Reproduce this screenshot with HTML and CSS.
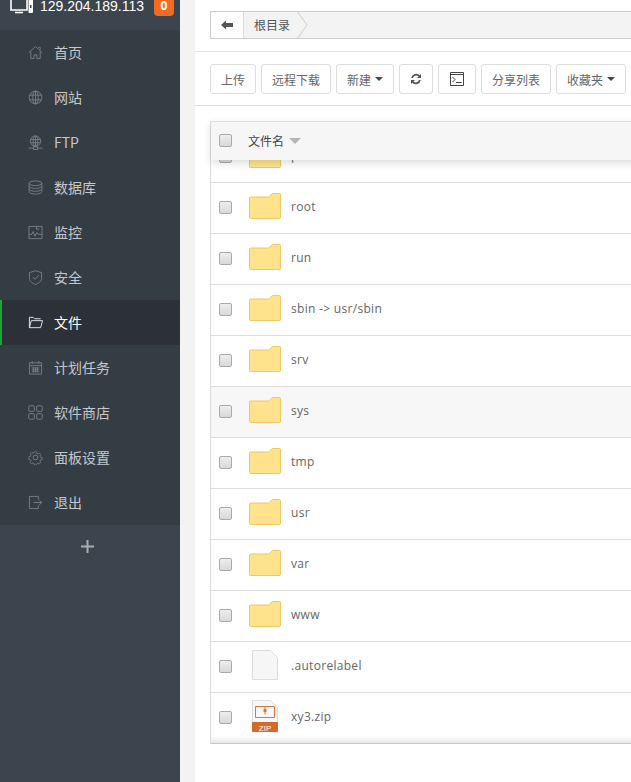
FILE: index.html
```html
<!DOCTYPE html>
<html lang="zh">
<head>
<meta charset="utf-8">
<title>文件</title>
<link rel="stylesheet" href="styles.css">
</head>
<body>
<aside class="sidebar">
  <div class="server">
    <svg class="server-icon" width="24" height="16" viewBox="0 0 24 16"><g fill="none" stroke="#fff" stroke-width="1.6"><path d="M1 -3h16v13H1z"/><path d="M5 12.500h8"/></g><rect x="18.500" y="-3" width="4.500" height="16" rx="1" fill="#fff"/><rect x="20" y="5" width="1.500" height="3" fill="#3c444d"/></svg>
    <span class="ip">129.204.189.113</span>
    <span class="badge">0</span>
  </div>
  <nav class="nav">
    <a class="nav-item"><svg class="ico" viewBox="0 0 16 16"><path d="M1 8l7-6.500L15 8M3 7v7.500h3.500v-4h3v4H13V7M11 2.500h2V5"/></svg>首页</a>
    <a class="nav-item"><svg class="ico" viewBox="0 0 16 16"><circle cx="8" cy="8" r="6.800"/><ellipse cx="8" cy="8" rx="3" ry="6.800"/><path d="M1.500 5.500h13M1.500 10.500h13M8 1v14"/></svg>网站</a>
    <a class="nav-item"><svg class="ico" viewBox="0 0 16 16"><circle cx="8" cy="6.500" r="5.500"/><ellipse cx="8" cy="6.500" rx="2.500" ry="5.500"/><path d="M2.800 4.800h10.400M2.800 8.200h10.400M8 1v11.500M.5 14h5.500M10 14h5.500"/><rect x="6" y="12.500" width="4" height="3"/></svg>FTP</a>
    <a class="nav-item"><svg class="ico" viewBox="0 0 16 16"><ellipse cx="8" cy="3.500" rx="6.800" ry="2.500"/><path d="M1.200 3.500v9c0 1.400 3 2.500 6.800 2.500s6.800-1.100 6.800-2.500v-9M1.200 6.500c0 1.400 3 2.500 6.800 2.500s6.800-1.100 6.800-2.500M1.200 9.500c0 1.400 3 2.500 6.800 2.500s6.800-1.100 6.800-2.500"/></svg>数据库</a>
    <a class="nav-item"><svg class="ico" viewBox="0 0 16 16"><path d="M1 1.500h14v13H1zM1 10l3 0 1.500-3 2 5 2-4 1.500 2h4M9 1.500v3h3"/></svg>监控</a>
    <a class="nav-item"><svg class="ico" viewBox="0 0 16 16"><path d="M8 .8l6.500 2v6c0 3.500-3.500 5.500-6.500 6.600-3-1.100-6.500-3.100-6.500-6.600v-6zM5 7.500l2.500 2.500 4-4.500"/></svg>安全</a>
    <a class="nav-item active"><svg class="ico" viewBox="0 0 16 16"><path d="M1.500 13.500v-11h4l1.500 1.500h6.500M1.500 13.500l2-7.500h12l-2 7.500z"/></svg>文件</a>
    <a class="nav-item"><svg class="ico" viewBox="0 0 16 16"><path d="M1.500 3h13v12h-13zM1.500 6h13M4.500 1v3M11.500 1v3M4 8.500h8M4 10.500h8M4 12.500h8M6 8v5M8 8v5M10 8v5"/></svg>计划任务</a>
    <a class="nav-item"><svg class="ico" viewBox="0 0 16 16"><rect x=".8" y=".8" width="6" height="6" rx="1.500"/><rect x="9.200" y=".8" width="6" height="6" rx="1.500"/><rect x=".8" y="9.200" width="6" height="6" rx="1.500"/><rect x="9.200" y="9.200" width="6" height="6" rx="1.500"/></svg>软件商店</a>
    <a class="nav-item"><svg class="ico" viewBox="0 0 16 16"><circle cx="8" cy="8" r="2.500"/><path d="M6.800 1h2.400l.4 2 1.500.7 1.800-1 1.600 1.700-1 1.700.6 1.500 2 .4v2.400l-2 .4-.6 1.500 1 1.700-1.600 1.700-1.800-1-1.500.7-.4 2H6.800l-.4-2-1.500-.7-1.800 1-1.600-1.700 1-1.700-.6-1.500-2-.4V7l2-.4.6-1.500-1-1.700 1.600-1.700 1.800 1 1.500-.7z" transform="translate(1 1) scale(.875)"/></svg>面板设置</a>
    <a class="nav-item"><svg class="ico" viewBox="0 0 16 16"><path d="M11 5V1.500H1.500v13H11V11M6 8h8.500M12 5.500L14.800 8 12 10.500"/></svg>退出</a>
  </nav>
  <div class="add"><svg width="13" height="13" viewBox="0 0 13 13"><path d="M0 5.500h13v2H0zM5.500 0h2v13h-2z" fill="#a9adb1"/></svg></div>
</aside>
<div class="gutter"></div>
<main class="main">
  <div class="path-bar">
    <div class="crumbs">
      <button class="back"><svg width="12" height="10" viewBox="0 0 12 10"><path d="M0 5l5-4.500V3h7v4H5v2.500z" fill="#555"/></svg></button>
      <span class="crumb">根目录</span>
      <svg class="chevron" width="11" height="26" viewBox="0 0 11 26"><path d="M0 -1L10 13 0 27" fill="none" stroke="#ccc"/></svg>
    </div>
  </div>
  <div class="toolbar">
    <button class="btn">上传</button>
    <button class="btn">远程下载</button>
    <button class="btn">新建<i class="caret"></i></button>
    <button class="btn"><svg width="12" height="12" viewBox="0 0 12 12"><path d="M1.200 5A5 5 0 0 1 9.700 2.300L11 1v4H7l1.500-1.500A3.300 3.300 0 0 0 3 5zM10.800 7A5 5 0 0 1 2.300 9.700L1 11V7h4L3.500 8.500A3.300 3.300 0 0 0 9 7z" fill="#555"/></svg></button>
    <button class="btn"><svg width="16" height="14" viewBox="0 0 16 14" fill="none" stroke="#444"><path d="M1.500.500h13v13h-13zM1.500 2.500h13" /><path d="M3.500 5L6 7.500 3.500 10M7 10.500h5.500"/></svg></button>
    <button class="btn">分享列表</button>
    <button class="btn">收藏夹<i class="caret"></i></button>
  </div>
  <section class="table">
    <div class="thead">
      <span class="check"></span>
      <span class="th-name">文件名</span>
      <i class="sort"></i>
    </div>
    <div class="tbody">
      <div class="rows">
        <div class="row"><span class="check"></span><svg class="file-ico" width="32" height="26" viewBox="0 0 32 26"><use href="#folder"/></svg><span class="name">proc</span></div>
        <div class="row"><span class="check"></span><svg class="file-ico" width="32" height="26" viewBox="0 0 32 26"><use href="#folder"/></svg><span class="name">root</span></div>
        <div class="row"><span class="check"></span><svg class="file-ico" width="32" height="26" viewBox="0 0 32 26"><use href="#folder"/></svg><span class="name">run</span></div>
        <div class="row"><span class="check"></span><svg class="file-ico" width="32" height="26" viewBox="0 0 32 26"><use href="#folder"/></svg><span class="name">sbin -&gt; usr/sbin</span></div>
        <div class="row"><span class="check"></span><svg class="file-ico" width="32" height="26" viewBox="0 0 32 26"><use href="#folder"/></svg><span class="name">srv</span></div>
        <div class="row hover"><span class="check"></span><svg class="file-ico" width="32" height="26" viewBox="0 0 32 26"><use href="#folder"/></svg><span class="name">sys</span></div>
        <div class="row"><span class="check"></span><svg class="file-ico" width="32" height="26" viewBox="0 0 32 26"><use href="#folder"/></svg><span class="name">tmp</span></div>
        <div class="row"><span class="check"></span><svg class="file-ico" width="32" height="26" viewBox="0 0 32 26"><use href="#folder"/></svg><span class="name">usr</span></div>
        <div class="row"><span class="check"></span><svg class="file-ico" width="32" height="26" viewBox="0 0 32 26"><use href="#folder"/></svg><span class="name">var</span></div>
        <div class="row"><span class="check"></span><svg class="file-ico" width="32" height="26" viewBox="0 0 32 26"><use href="#folder"/></svg><span class="name">www</span></div>
        <div class="row"><span class="check"></span><svg class="file-ico" width="32" height="30" viewBox="0 0 32 30"><path d="M3.500.500h18l7 7v22h-25z" fill="#f6f6f6" stroke="#dcdcdc"/></svg><span class="name">.autorelabel</span></div>
        <div class="row"><span class="check"></span><svg class="file-ico" width="32" height="32" viewBox="0 0 32 32"><path d="M3.500.500h18l7 7V24h-25z" fill="#f8f8f8" stroke="#dcdcdc"/><path d="M6.500 6.500h19v11h-19zM16 6.500v8" fill="none" stroke="#d9773a"/><rect x="14.500" y="9" width="3" height="3" fill="#d9773a"/><rect x="3" y="22" width="26" height="10" rx="1" fill="#d5692a"/><text x="16" y="30.500" class="zip">ZIP</text></svg><span class="name">xy3.zip</span></div>
      </div>
    </div>
  </section>
</main>
<svg class="defs" width="0" height="0"><defs><symbol id="folder" viewBox="0 0 32 26"><path d="M.5 5c0-.6.400-1 1-1h18l4-3.500h7c.600 0 1 .400 1 1v23c0 .600-.400 1-1 1h-29c-.600 0-1-.400-1-1z" fill="#ffe38c" stroke="#ecc868"/></symbol></defs></svg>
</body>
</html>
```
FILE: styles.css
```css
* { box-sizing: border-box; }
html, body { height: 100%; margin: 0; }
body {
  display: flex;
  overflow: hidden;
  background: #fff;
  color: #666;
  font: 12px "Open Sans", "Noto Sans CJK SC", sans-serif;
}
.sidebar { flex: 0 0 180px; background: #3c444d; }
.server {
  height: 30px;
  display: flex;
  align-items: flex-start;
  padding-left: 10px;
  color: #fff;
  font: 14px/12px "Liberation Sans", sans-serif;
}
.server-icon { flex: none; margin-right: 6px; }
.ip { flex: 0 0 110px; white-space: nowrap; }
.badge {
  width: 20px;
  height: 16px;
  margin-left: 4px;
  background: #f26b21;
  border-radius: 0 0 4px 4px;
  font: bold 12px/12px "Open Sans", sans-serif;
  text-align: center;
}
.nav { background: #353d44; padding-left: 2px; }
.nav-item {
  height: 45px;
  display: flex;
  align-items: center;
  padding: 0 0 1px 26px;
  color: #c5c8cb;
  font: 14px "Noto Sans CJK SC", sans-serif;
}
.nav-item.active {
  background: #2c3138;
  color: #fff;
  margin-left: -2px;
  padding-left: 26px;
  border-left: 2px solid #20a53a;
}
.ico {
  width: 15px;
  height: 15px;
  margin-right: 11px;
  fill: none;
  stroke: #777e84;
  stroke-width: 1;
}
.active .ico { stroke: #e6e7e8; }
.add { height: 42px; display: flex; align-items: center; justify-content: center; }
.add svg { margin-left: -6px; }
.gutter { flex: 0 0 15px; background: #f3f3f3; }
.main { flex: 1; min-width: 0; overflow: hidden; }
.path-bar { height: 52px; padding: 11px 0 0 15px; border-bottom: 1px solid #e4e4e4; }
.crumbs {
  height: 28px;
  margin-right: -10px;
  display: flex;
  background: #f3f3f3;
  border: 1px solid #ccc;
}
.back {
  flex: none;
  width: 33px;
  height: 26px;
  padding: 0;
  background: #fff;
  border: 0;
  border-right: 1px solid #ddd;
}
.crumb {
  flex: none;
  width: 53px;
  padding-left: 10px;
  color: #555;
  font: 12px/26px "Noto Sans CJK SC", sans-serif;
}
.chevron { flex: none; }
.toolbar {
  height: 54px;
  display: flex;
  gap: 5px;
  padding: 12px 0 0 15px;
  border-bottom: 1px solid #ddd;
}
.btn {
  height: 30px;
  padding: 0 10px;
  flex: none;
  display: flex;
  align-items: center;
  background: #fff;
  border: 1px solid #ddd;
  border-radius: 3px;
  color: #666;
  font: 12px "Noto Sans CJK SC", sans-serif;
}
.btn svg { flex: none; }
.caret {
  margin-left: 4px;
  border-top: 4px solid #444;
  border-left: 4px solid transparent;
  border-right: 4px solid transparent;
}
.table { margin: 15px -10px 0 15px; position: relative; border-left: 1px solid #ddd; }
.thead {
  position: relative;
  z-index: 1;
  height: 39px;
  display: flex;
  align-items: center;
  padding: 0 0 2px 8px;
  background: #f6f6f6;
  border-top: 1px solid #ddd;
  box-shadow: 0 3px 8px rgba(0, 0, 0, .14);
}
.check {
  flex: none;
  width: 13px;
  height: 13px;
  background: linear-gradient(#eee, #d8d8d8);
  border: 1px solid #aaa;
  border-radius: 2px;
}
.th-name { margin-left: 16px; color: #444; font: 12px "Noto Sans CJK SC", sans-serif; }
.sort {
  margin: 2px 0 0 5px;
  border-top: 6px solid #b5b5b5;
  border-left: 6px solid transparent;
  border-right: 6px solid transparent;
}
.tbody { position: relative; height: 584px; overflow: hidden; }
.tbody::after {
  content: "";
  position: absolute;
  left: 0; right: 0; bottom: 0;
  height: 8px;
  background: linear-gradient(rgba(0, 0, 0, 0), rgba(0, 0, 0, .1));
}
.rows { margin-top: -28px; }
.row {
  height: 51px;
  display: flex;
  align-items: center;
  padding: 0 0 2px 8px;
  border-bottom: 1px solid #ddd;
}
.row.hover { background: #f7f7f7; }
.file-ico { flex: none; margin: 0 0 2px 17px; }
.name { margin: 0 0 2px 10px; color: #666; font: 12px "Open Sans", sans-serif; letter-spacing: .3px; }
.zip { fill: #fff; font: 8px "Liberation Sans", sans-serif; text-anchor: middle; }
.defs { position: absolute; }
```
